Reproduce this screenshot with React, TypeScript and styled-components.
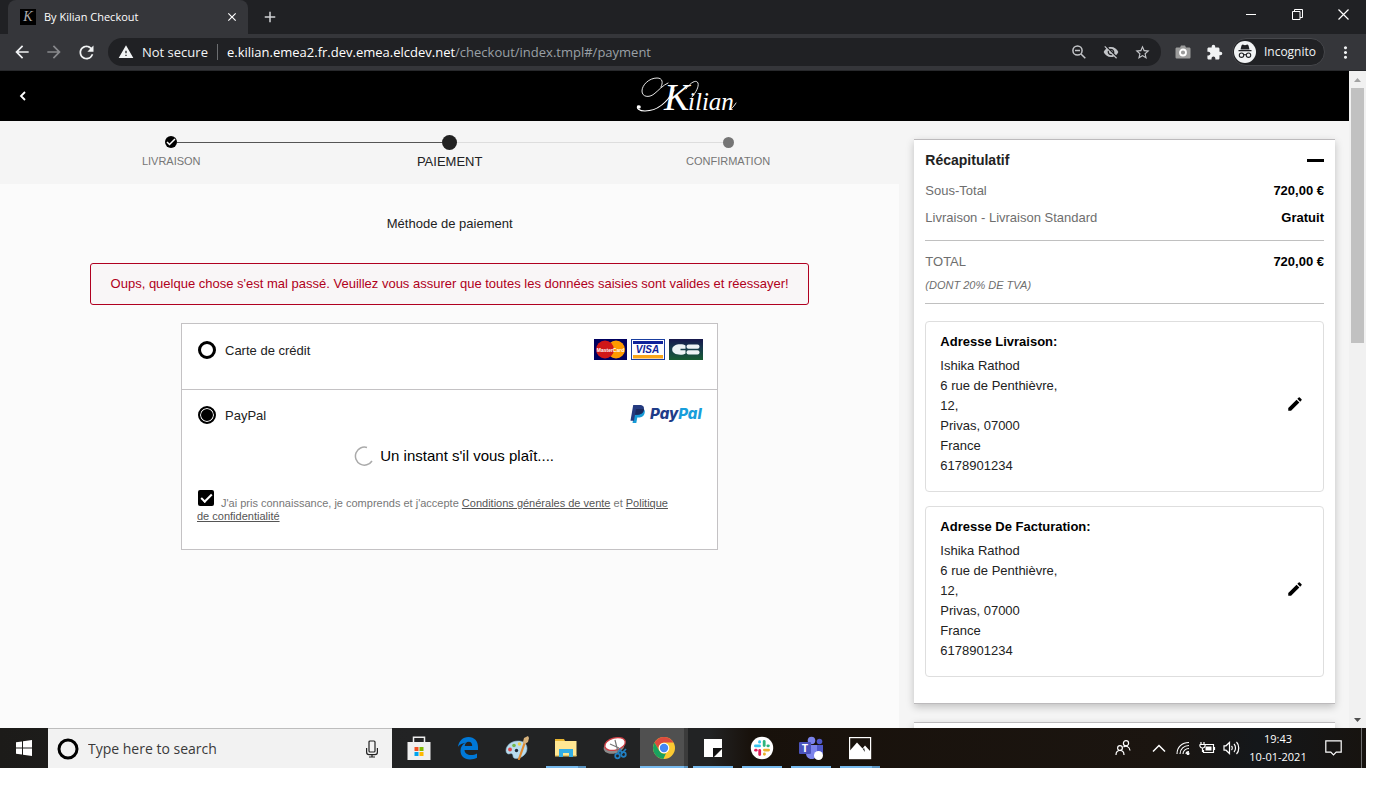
import React from "react";
import styled, { createGlobalStyle } from "styled-components";
import {
  MdAdd,
  MdArrowBack,
  MdArrowForward,
  MdClose,
  MdEdit,
  MdExtension,
  MdMoreVert,
  MdRefresh,
  MdStarBorder,
  MdVisibilityOff,
  MdWarning,
} from "react-icons/md";

const pageFont = `"Liberation Sans", Arial, sans-serif`;
const systemFont = `"Open Sans", "Noto Sans", sans-serif`;

const GlobalStyle = createGlobalStyle`
  *, *::before, *::after { box-sizing: border-box; }
  body { margin: 0; background: #fff; font-family: ${pageFont}; }
  button { border: 0; padding: 0; background: none; color: inherit; font: inherit; }
  h1, h2, h3, p, dl, dd, dt, ol, address { margin: 0; padding: 0; font: inherit; }
  svg { display: block; }
`;

const Screen = styled.div`
  display: flex;
  flex-direction: column;
  height: calc(100vh - 40px);
  margin-right: 18px;
`;

/* Browser window */

const TabStrip = styled.div`
  display: flex;
  height: 34px;
  padding-left: 8px;
  background: #202124;
  color: #e8eaed;
  font: 12px/16px ${systemFont};
`;

const Tab = styled.div`
  display: flex;
  align-items: center;
  gap: 8px;
  width: 240px;
  padding: 0 9px 0 12px;
  border-radius: 8px 8px 0 0;
  background: #35363a;
`;

const Favicon = styled.span`
  width: 16px;
  height: 16px;
  background: #000;
  color: #aaa;
  font: italic 14px/16px "Liberation Serif", serif;
  text-align: center;
`;

const TabTitle = styled.span`
  flex: 1;
  font-size: 11px;
  color: #fff;
`;

const NewTab = styled.button`
  display: grid;
  place-items: center;
  width: 44px;
  color: #d0d2d5;
`;

const WindowControls = styled.div`
  display: flex;
  height: 28px;
  margin-left: auto;
`;

const WindowButton = styled.button`
  display: grid;
  place-items: center;
  width: 46px;
`;

const Toolbar = styled.div`
  display: flex;
  align-items: center;
  height: 37px;
  padding: 0 5px 0 6px;
  border-bottom: 1px solid #28292c;
  background: #35363a;
  color: #f1f3f4;
  font: 13px/18px ${systemFont};
`;

const ToolButton = styled.button<{ $dim?: boolean }>`
  display: grid;
  place-items: center;
  width: 32px;
  height: 28px;
  color: ${(p) => (p.$dim ? "#88898c" : "#f1f3f4")};
`;

const Omnibox = styled.div`
  display: flex;
  flex: 1;
  align-items: center;
  height: 28px;
  margin: 0 6px;
  padding: 0 2px 0 10px;
  border-radius: 14px;
  background: #202124;
`;

const SecurityChip = styled.button`
  display: flex;
  align-items: center;
  gap: 8px;
  padding-right: 9px;
  margin-right: 9px;
  border-right: 1px solid #6b6d70;
  line-height: 16px;
`;

const Url = styled.span`
  flex: 1;
  color: #9aa0a6;
`;

const UrlHost = styled.span`
  color: #fff;
`;

const OmniIcon = styled(ToolButton)`
  color: #c3c5c8;
`;

const IncognitoChip = styled.button`
  display: flex;
  align-items: center;
  gap: 8px;
  height: 28px;
  margin: 0 4px 0 1px;
  padding: 0 8px 0 1px;
  border: 1px solid #46474b;
  border-radius: 14px;
  background: #202124;
  font-size: 12px;
`;

/* Page viewport */

const Viewport = styled.div`
  display: flex;
  flex: 1;
  min-height: 0;
`;

const Page = styled.div`
  flex: 1;
  overflow: hidden;
  background: #f5f5f5;
`;

const SiteHeader = styled.header`
  display: grid;
  grid-template-columns: 1fr auto 1fr;
  align-items: center;
  height: 50px;
  padding: 0 14px;
  background: #000;
  color: #fff;
`;

const BackButton = styled.button`
  display: grid;
  place-items: center;
  width: 18px;
  height: 24px;
`;

const Columns = styled.div`
  display: grid;
  grid-template-columns: 2fr 1fr;
`;

const Main = styled.main`
  min-height: 100vh;
  background: #fbfbfb;
`;

const Stepper = styled.ol`
  display: grid;
  grid-template-columns: repeat(3, 1fr);
  height: 63px;
  padding: 13px 32px 0;
  background: #f5f5f5;
  list-style: none;
`;

const Step = styled.li<{ $current?: boolean }>`
  display: flex;
  flex-direction: column;
  gap: 4px;
  color: ${(p) => (p.$current ? "#222" : "#767676")};
  font-size: ${(p) => (p.$current ? "13px" : "11px")};
  line-height: ${(p) => (p.$current ? "16px" : "14px")};
  text-align: center;
`;

const StepTrack = styled.span`
  display: flex;
  align-items: center;
  height: 16px;
`;

const StepLine = styled.span<{ $color: string }>`
  flex: 1;
  height: 1px;
  background: ${(p) => p.$color};
`;

const StepDot = styled.span<{ $size: number; $color: string }>`
  display: grid;
  place-items: center;
  width: ${(p) => p.$size}px;
  height: ${(p) => p.$size}px;
  border-radius: 50%;
  background: ${(p) => p.$color};
`;

const SectionTitle = styled.h1`
  padding-top: 32px;
  color: #222;
  font-size: 13px;
  line-height: 16px;
  text-align: center;
`;

const ErrorBox = styled.p`
  margin: 31px 90px 0;
  padding: 12px 8px;
  border: 1px solid #b00020;
  border-radius: 3px;
  background: #f9f6f7;
  color: #b00020;
  font-size: 13px;
  line-height: 16px;
  text-align: center;
`;

const PaymentPanel = styled.form`
  margin: 18px 181px 0;
  border: 1px solid #c4c2c4;
  background: #fff;
`;

const PaymentOption = styled.section`
  min-height: 65px;
  padding: 15px 14px 26px 15px;

  & + & {
    padding-top: 14px;
    border-top: 1px solid #c4c2c4;
  }
`;

const OptionHeader = styled.div`
  display: flex;
  align-items: center;
  justify-content: space-between;
  height: 22px;
`;

const OptionLabel = styled.label`
  display: flex;
  align-items: center;
  gap: 9px;
  color: #222;
  font-size: 13px;
`;

const Radio = styled.input`
  appearance: none;
  width: 18px;
  height: 18px;
  margin: 0 0 0 1px;
  border: 3px solid #000;
  border-radius: 50%;
  background: #fff;

  &:checked {
    border-width: 2px;
    background: #000;
    box-shadow: inset 0 0 0 1px #fff;
  }
`;

const LogoRow = styled.span`
  display: flex;
  align-self: flex-start;
  gap: 4px;
`;

const Waiting = styled.p`
  display: flex;
  align-items: center;
  justify-content: center;
  gap: 6px;
  margin-top: 20px;
  padding-left: 8px;
  color: #000;
  font-size: 15px;
  line-height: 20px;
`;

const Terms = styled.p`
  margin-top: 24px;
  padding-right: 24px;
  color: #777;
  font-size: 11px;
  line-height: 13px;
`;

const TermsCheck = styled.input`
  appearance: none;
  display: inline-block;
  width: 16px;
  height: 16px;
  margin: 0 7px 1px 1px;
  border-radius: 2px;
  background: #000;
  vertical-align: baseline;

  &:checked::before {
    content: "";
    display: block;
    width: 11px;
    height: 6px;
    margin: 4px 0 0 3px;
    border: solid #fff;
    border-width: 0 0 2px 2px;
    transform: rotate(-45deg);
  }
`;

const TermsLink = styled.a`
  color: #555;
`;

/* Order summary */

const Aside = styled.aside`
  display: flex;
  flex-direction: column;
  gap: 18px;
  padding: 18px 14px 0 15px;
`;

const Card = styled.section`
  min-height: 60px;
  padding: 10px 11px 26px;
  border: solid #bcbabc;
  border-width: 1px 0;
  background: #fff;
  box-shadow: 0 3px 8px rgba(0, 0, 0, 0.22);
`;

const CardHeader = styled.div`
  display: flex;
  align-items: center;
  justify-content: space-between;
  height: 20px;
`;

const CardTitle = styled.h2`
  color: #222;
  font-size: 14px;
  font-weight: bold;
`;

const CollapseButton = styled.button`
  width: 17px;
  height: 3px;
  background: #000;
`;

const Totals = styled.dl`
  display: flex;
  flex-direction: column;
  gap: 7px;
  padding: 11px 0 12px;
  border-bottom: 1px solid #c0c0c0;
`;

const TotalRow = styled.div`
  display: flex;
  justify-content: space-between;
  color: #6e6e6e;
  font-size: 13px;
  line-height: 20px;
`;

const Amount = styled.dd`
  color: #000;
  font-weight: bold;
`;

const TaxNote = styled.div`
  color: #6e6e6e;
  font-size: 11px;
  font-style: italic;
  line-height: 12px;
`;

const AddressBox = styled.section`
  display: flex;
  align-items: center;
  justify-content: space-between;
  margin-top: 14px;
  padding: 10px 19px 15px 14px;
  border: 1px solid #dedede;
  border-radius: 4px;
  color: #222;
  font-size: 13px;
  line-height: 20px;

  ${Totals} + & {
    margin-top: 17px;
  }
`;

const AddressTitle = styled.h3`
  margin-bottom: 4px;
  color: #000;
  font-weight: bold;
`;

const Scrollbar = styled.div`
  display: flex;
  flex-direction: column;
  width: 17px;
  background: #f1f1f1;
`;

const ScrollArrow = styled.button`
  display: grid;
  place-items: center;
  height: 17px;
`;

const ScrollTrack = styled.div`
  flex: 1;
  padding: 0 2px;
`;

const ScrollThumb = styled.div`
  height: 41%;
  background: #c1c1c1;
`;

/* Taskbar */

const Taskbar = styled.footer`
  display: flex;
  height: 40px;
  background: linear-gradient(90deg, #1c1b19 0, #222324 30%, #222324 52%, #18110b 55%, #1b1510 85%, #14171a 92%, #17130f 100%);
  color: #fff;
  font: 12px/18px ${systemFont};
`;

const StartButton = styled.button`
  display: grid;
  place-items: center;
  width: 48px;
`;

const SearchBox = styled.label`
  display: flex;
  align-items: center;
  width: 344px;
  padding: 0 12px 0 8px;
  border-top: 1px solid #bdbdbd;
  background: #f2f2f2;
  color: #222;
`;

const SearchInput = styled.input`
  flex: 1;
  min-width: 0;
  margin-left: 8px;
  padding: 0;
  border: 0;
  outline: 0;
  background: none;
  font: 14px/20px ${systemFont};

  &::placeholder {
    color: #3a3a3a;
    opacity: 1;
  }
`;

const Apps = styled.nav`
  display: flex;
  gap: 1px;
  margin-left: 3px;
`;

const AppButton = styled.button<{ $open?: boolean; $active?: boolean; $stacked?: boolean }>`
  display: flex;
  flex-direction: column;
  align-items: center;
  justify-content: space-between;
  width: 48px;
  padding-top: 8px;
  background: ${(p) => (p.$active ? "linear-gradient(90deg, #505050 44px, #3b3b3b 44px)" : "none")};

  &::after {
    content: "";
    width: ${(p) => (p.$active ? 48 : 40)}px;
    height: 2px;
    background: ${(p) =>
      !p.$open
        ? "none"
        : p.$active
          ? "linear-gradient(90deg, #76b9ed 44px, #5a93c0 44px)"
          : p.$stacked
            ? "linear-gradient(90deg, #76b9ed 32px, #5a93c0 32px)"
            : "#76b9ed"};
  }
`;

const Tray = styled.div`
  display: flex;
  align-items: center;
  margin-left: auto;
`;

const TrayButton = styled.button`
  display: grid;
  place-items: center;
  width: 24px;
  height: 40px;
`;

const PeopleButton = styled(TrayButton)`
  margin-right: 12px;
`;

const Clock = styled.button`
  width: 66px;
  padding-left: 4px;
  font-size: 11px;
  text-align: center;
`;

const NotificationButton = styled(TrayButton)`
  width: 48px;
  margin-right: 4px;
`;

const ShowDesktop = styled.button`
  width: 5px;
  height: 40px;
  border-left: 1px solid #6d6d6d;
`;

/* Drawings */

const KilianLogo = () => (
  <svg width="126" height="42" viewBox="-22 0 126 42" role="img" aria-label="Kilian">
    <g fill="none" stroke="#fff" strokeLinecap="round">
      <path strokeWidth=".9" d="M27 12C29 8 29 3 23 3C15 3 8 10 8 16C8 22 15 23 20 19C24 16 29 10 34 8" />
      <path strokeWidth="1.200" d="M40 15C34 26 24 36 11 36C5 36 2 33 4 31" />
      <path strokeWidth=".9" d="M52 14C56 8 62 4 64 8C65 12 62 17 58 22" />
      <path strokeWidth=".9" d="M96 34C98 34 100 31 102 28" />
    </g>
    <circle cx="5" cy="32" r="1.800" fill="#fff" />
    <text y="35" fill="#fff" fontFamily="Liberation Serif, serif" fontStyle="italic">
      <tspan x="30" fontSize="38">
        K
      </tspan>
      <tspan x="54" fontSize="25">
        ilian
      </tspan>
    </text>
  </svg>
);

const MasterCardLogo = () => (
  <svg width="33" height="21" viewBox="0 0 33 21" role="img" aria-label="MasterCard">
    <rect width="33" height="21" fill="#00005f" />
    <circle cx="22" cy="10.500" r="9" fill="#ff9a00" />
    <circle cx="11" cy="10.500" r="9" fill="#d01818" />
    <text x="16.500" y="12.500" textAnchor="middle" fill="#fff" fontFamily="Liberation Sans" fontWeight="bold" fontSize="5">
      MasterCard
    </text>
  </svg>
);

const VisaLogo = () => (
  <svg width="34" height="21" viewBox="0 0 34 21" role="img" aria-label="Visa">
    <rect x=".5" y=".5" width="33" height="20" fill="#fff" stroke="#1a3ea0" />
    <rect x="2" y="2" width="30" height="3" fill="#10239a" />
    <rect x="2" y="16" width="30" height="3.500" fill="#f9a61a" />
    <text x="16.500" y="14" textAnchor="middle" fill="#10239a" fontFamily="Liberation Sans" fontWeight="bold" fontStyle="italic" fontSize="10">
      VISA
    </text>
  </svg>
);

const CbLogo = () => (
  <svg width="34" height="21" viewBox="0 0 34 21" role="img" aria-label="CB">
    <defs>
      <linearGradient id="cb" x1="0" y1="0" x2="0" y2="1">
        <stop offset="0" stopColor="#17174c" />
        <stop offset=".45" stopColor="#173a4c" />
        <stop offset="1" stopColor="#175c31" />
      </linearGradient>
    </defs>
    <rect width="34" height="21" fill="url(#cb)" />
    <path fill="#edf3f5" d="M16.500 9.800V6.500c-1-.9-3-1.200-5-1.200-5 0-8.300 2-8.300 5.200s3.300 5.200 8.300 5.200c2 0 4-.3 5-1.200v-3.300h-5V9.800z" />
    <rect x="17.500" y="5.500" width="13" height="4.300" rx="2" fill="#edf3f5" />
    <rect x="17.500" y="11.200" width="13" height="4.300" rx="2" fill="#edf3f5" />
  </svg>
);

const PayPalLogo = () => (
  <svg width="74" height="22" viewBox="0 0 74 22" role="img" aria-label="PayPal">
    <path fill="#179bd7" d="M6.500 5h8.200c1.300 1.100 1.300 2.700.9 4.200-.8 3.200-3.200 4.200-6 4.200H8.300l-1 5.600H3.500z" />
    <path fill="#253b80" d="M4.200 1h6.300c3.500 0 5 1.600 4.400 4.700-.7 3.500-3.200 5-6.600 5H6l-1 6.100H1.500z" />
    <path fill="#1b2a5f" d="M7 5h7.900c.2 3.500-2.700 5.700-6.600 5.700H6z" />
    <text x="21" y="15" fontFamily="Inter" fontWeight="800" fontStyle="italic" fontSize="15">
      <tspan fill="#1f3c88">Pay</tspan>
      <tspan fill="#189edb">Pal</tspan>
    </text>
  </svg>
);

const Spinner = () => (
  <svg width="20" height="20" viewBox="0 0 20 20" fill="none" stroke="#aaa" strokeWidth="1.500">
    <path d="M13 1.500A9 9 0 1 0 18 15" />
  </svg>
);

const CheckMark = () => (
  <svg width="10" height="8" viewBox="0 0 10 8" fill="none" stroke="#fff" strokeWidth="1.500">
    <path d="M1 4l2.500 2.500L9 1" />
  </svg>
);

const ZoomOutIcon = () => (
  <svg width="14" height="14" viewBox="0 0 14 14" fill="none" stroke="currentColor" strokeWidth="1.500">
    <circle cx="5.500" cy="5.500" r="4.600" />
    <path d="M3 5.500h5M9 9l4.300 4.300" />
  </svg>
);

const CameraIcon = () => (
  <svg width="16" height="14" viewBox="0 0 16 14">
    <path fill="#9c9c9c" d="M2 2.500h3L6 .5h4l1 2h3c1 0 1.500.5 1.500 1.500v8c0 1-.5 1.500-1.500 1.500H2C1 13.500.5 13 .5 12V4c0-1 .5-1.500 1.500-1.500z" />
    <circle cx="8" cy="7.500" r="3" fill="#9c9c9c" stroke="#fff" strokeWidth="1.800" />
  </svg>
);

const IncognitoIcon = () => (
  <svg width="22" height="22" viewBox="0 0 22 22">
    <circle cx="11" cy="11" r="11" fill="#f1f3f4" />
    <path fill="#202124" d="M7.500 4.500l1-1 2.500.8 2.500-.8 1 1 1 4h-9zM4.500 9h13v1.200h-13z" />
    <g fill="none" stroke="#202124" strokeWidth="1.100">
      <circle cx="7.500" cy="14.200" r="2.200" />
      <circle cx="14.500" cy="14.200" r="2.200" />
      <path d="M9.700 14c.8-.6 1.800-.6 2.600 0" />
    </g>
  </svg>
);

const StoreIcon = () => (
  <svg width="24" height="24" viewBox="0 0 24 24">
    <path d="M6.500 6V1.200h11V6" fill="none" stroke="#eee" strokeWidth="1.500" />
    <path d="M.5 6h23v18H.5z" fill="#f0f0f0" />
    <path d="M7.500 11H11.500V15H7.500z" fill="#f25022" />
    <path d="M12.500 11H16.500V15H12.500z" fill="#7fba00" />
    <path d="M7.500 16H11.500V20H7.500z" fill="#00a4ef" />
    <path d="M12.500 16H16.500V20H12.500z" fill="#ffb900" />
  </svg>
);

const EdgeIcon = () => (
  <svg width="24" height="24" viewBox="0 0 24 24">
    <path
      fill="#0078d7"
      d="M2 10.700C2.800 5 6.800 1 12.400 1 18.500 1 22 5.300 22 11v3H8.500c.2 3.400 3 5 6.500 5 2.200 0 4.200-.6 6-1.600v4.400c-2 1.100-4.500 1.700-7 1.700-6 0-9.500-3.600-9.500-8.700 0-4 2.200-6.800 5.500-8.200C6.500 7.300 3.500 8.700 2 10.700zm6.700-.7h7.500c0-2.600-1-4.200-3.500-4.200-2.300 0-3.600 1.800-4 4.200z"
    />
  </svg>
);

const PaintIcon = () => (
  <svg width="24" height="24" viewBox="0 0 24 24">
    <path fill="#b9dcee" stroke="#8fb9d0" strokeWidth=".6" d="M13 5C6 5 1 9.500 1 14.500c0 3 2 4 4 3.200 2-.7 3 .6 3 2.300 0 2 1.600 2.800 4 2.400 6-1 10-5 10-10S18 5 13 5z" />
    <circle cx="5" cy="13.500" r="1.900" fill="#e04848" />
    <circle cx="9" cy="9.500" r="1.800" fill="#72b84c" />
    <circle cx="14.500" cy="8" r="1.800" fill="#f0d04a" />
    <circle cx="11.500" cy="14.500" r="1.700" fill="#1f2c38" />
    <path stroke="#e08a30" strokeWidth="2.200" strokeLinecap="round" d="M20 6l-6 17" />
    <path fill="#d7b27c" d="M18 6l1-4 4-2 1 2-1 4-3 2z" />
  </svg>
);

const FolderIcon = () => (
  <svg width="24" height="24" viewBox="0 0 24 24">
    <path fill="#e8b530" d="M1 3h9l1 2v4H1z" />
    <path fill="#ffe793" d="M1 5h21.500v15H1z" />
    <path fill="#e8c766" d="M1 19h21.500v1.500H1z" />
    <path fill="#34aee4" d="M5 13h14v8h-4v-4H9v4H5z" />
  </svg>
);

const SnipIcon = () => (
  <svg width="24" height="24" viewBox="0 0 24 24">
    <ellipse cx="11" cy="11" rx="10.500" ry="6.500" transform="rotate(-15 11 11)" fill="#8b8b8b" />
    <ellipse cx="12" cy="8" rx="10.500" ry="6" transform="rotate(-15 12 8)" fill="#fff" stroke="#cf3f45" strokeWidth="1.300" />
    <path stroke="#777" strokeWidth="1.200" d="M7 8l9 4M12 4l3 12" />
    <g fill="none" stroke="#2280c4" strokeWidth="1.700">
      <circle cx="14.500" cy="20" r="2.300" />
      <circle cx="20.500" cy="18.500" r="2.300" />
      <path d="M15 17.500l2-4 2 3.500 4-4" />
    </g>
  </svg>
);

const ChromeIcon = () => (
  <svg width="24" height="24" viewBox="0 0 24 24">
    <circle cx="12" cy="12" r="11" fill="#fbc932" />
    <path fill="#dd4b3e" d="M2.500 6.500A11 11 0 0 1 21.500 6.500H12A5.500 5.500 0 0 0 7.200 14.800z" />
    <path fill="#1aa15f" d="M2.500 6.500L7.200 14.800A5.500 5.500 0 0 0 14 17.200L11.400 23A11 11 0 0 1 2.500 6.500z" />
    <circle cx="12" cy="12" r="5.300" fill="#fff" />
    <circle cx="12" cy="12" r="4.200" fill="#4587f3" />
  </svg>
);

const NotesIcon = () => (
  <svg width="24" height="24" viewBox="0 0 24 24">
    <path fill="#fff" d="M3 3h18v9h-9v9H3z" />
    <path fill="#111" d="M12 12h9l-9 9z" />
    <path fill="#fff" d="M21 13v8h-8z" />
  </svg>
);

const SlackIcon = () => (
  <svg width="24" height="24" viewBox="0 0 24 24">
    <circle cx="12" cy="12" r="11.200" fill="#fff" />
    <g fill="#36c5f0">
      <rect x="4" y="8.500" width="7" height="2.800" rx="1.400" />
      <rect x="8.200" y="4.300" width="2.800" height="3.300" rx="1.400" />
    </g>
    <g fill="#2eb67d">
      <rect x="12.800" y="4" width="2.800" height="7" rx="1.400" />
      <rect x="16.400" y="8.400" width="3.400" height="2.800" rx="1.400" />
    </g>
    <g fill="#ecb22e">
      <rect x="13" y="12.700" width="7" height="2.800" rx="1.400" />
      <rect x="13" y="16.400" width="2.800" height="3.300" rx="1.400" />
    </g>
    <g fill="#e01e5a">
      <rect x="8.300" y="13" width="2.800" height="7" rx="1.400" />
      <rect x="4.200" y="12.800" width="3.400" height="2.800" rx="1.400" />
    </g>
  </svg>
);

const TeamsIcon = () => (
  <svg width="26" height="24" viewBox="0 0 26 24">
    <circle cx="13.500" cy="4.500" r="3.800" fill="#7b83eb" />
    <circle cx="21.500" cy="5.500" r="2.800" fill="#5059c9" />
    <path fill="#5059c9" d="M17 9h8v8c0 2-2 4-4 4h-4z" />
    <path fill="#7b83eb" d="M8 9h11v8c0 4-2 6-5.500 6S8 20.500 8 17z" />
    <rect x="1" y="6" width="12" height="12" rx="1" fill="#4b53bc" />
    <text x="7" y="16" textAnchor="middle" fill="#fff" fontFamily="Open Sans" fontWeight="bold" fontSize="11">
      T
    </text>
    <circle cx="20.500" cy="19.500" r="4.500" fill="#fff" />
  </svg>
);

const PhotosIcon = () => (
  <svg width="24" height="24" viewBox="0 0 24 24">
    <rect x="1.600" y="1.600" width="21" height="21" fill="none" stroke="#fff" strokeWidth="1.200" />
    <path fill="#fff" d="M1.500 15L9 6.500l5.500 6L17 9.500l5.500 6V23h-21z" />
    <path fill="#222" d="M14.800 13l2.200 3-.8-4z" />
  </svg>
);

const lineIcon = { fill: "none", stroke: "#fff", strokeWidth: 1.2 } as const;

/* Data */

const addressLines = ["Ishika Rathod", "6 rue de Penthièvre,", "12,", "Privas, 07000", "France", "6178901234"];

const apps = [
  { name: "Microsoft Store", icon: <StoreIcon /> },
  { name: "Edge", icon: <EdgeIcon /> },
  { name: "Paint", icon: <PaintIcon /> },
  { name: "File Explorer", icon: <FolderIcon />, open: true, stacked: true },
  { name: "Snipping Tool", icon: <SnipIcon /> },
  { name: "Chrome", icon: <ChromeIcon />, open: true, active: true },
  { name: "Sticky Notes", icon: <NotesIcon />, open: true },
  { name: "Slack", icon: <SlackIcon />, open: true },
  { name: "Teams", icon: <TeamsIcon />, open: true },
  { name: "Photos", icon: <PhotosIcon />, open: true, stacked: true },
];

const DONE = "#555";
const TODO = "#ddd";
const NONE = "transparent";

const Address = ({ title }: { title: string }) => (
  <AddressBox>
    <div>
      <AddressTitle>{title}</AddressTitle>
      <address>
        {addressLines.map((line) => (
          <div key={line}>{line}</div>
        ))}
      </address>
    </div>
    <button type="button" aria-label={`Modifier ${title}`}>
      <MdEdit size={18} color="#000" />
    </button>
  </AddressBox>
);

const BrowserChrome = () => (
  <>
    <TabStrip>
      <Tab>
        <Favicon>K</Favicon>
        <TabTitle>By Kilian Checkout</TabTitle>
        <button type="button" aria-label="Close tab">
          <MdClose size={14} color="#fff" />
        </button>
      </Tab>
      <NewTab type="button" aria-label="New tab">
        <MdAdd size={18} />
      </NewTab>
      <WindowControls>
        <WindowButton type="button" aria-label="Minimize">
          <svg width="11" height="11">
            <path d="M0 5.500h10" stroke="#fff" />
          </svg>
        </WindowButton>
        <WindowButton type="button" aria-label="Restore">
          <svg width="11" height="11" fill="none" stroke="#fff">
            <path d="M.5 2.500h7.500v8H.5zM2.500 2.500V.5h8v8H8" />
          </svg>
        </WindowButton>
        <WindowButton type="button" aria-label="Close">
          <svg width="11" height="11" stroke="#fff" strokeWidth="1.200">
            <path d="M.5.5l10 10M10.500.5l-10 10" />
          </svg>
        </WindowButton>
      </WindowControls>
    </TabStrip>
    <Toolbar>
      <ToolButton type="button" aria-label="Back">
        <MdArrowBack size={20} />
      </ToolButton>
      <ToolButton type="button" aria-label="Forward" $dim>
        <MdArrowForward size={20} />
      </ToolButton>
      <ToolButton type="button" aria-label="Reload">
        <MdRefresh size={21} />
      </ToolButton>
      <Omnibox>
        <SecurityChip type="button">
          <MdWarning size={16} />
          Not secure
        </SecurityChip>
        <Url>
          <UrlHost>e.kilian.emea2.fr.dev.emea.elcdev.net</UrlHost>
          /checkout/index.tmpl#/payment
        </Url>
        <OmniIcon type="button" aria-label="Zoom">
          <ZoomOutIcon />
        </OmniIcon>
        <OmniIcon type="button" aria-label="Cookies blocked">
          <MdVisibilityOff size={16} />
        </OmniIcon>
        <OmniIcon type="button" aria-label="Bookmark">
          <MdStarBorder size={17} />
        </OmniIcon>
      </Omnibox>
      <ToolButton type="button" aria-label="Screenshot extension" $dim>
        <CameraIcon />
      </ToolButton>
      <ToolButton type="button" aria-label="Extensions">
        <MdExtension size={17} />
      </ToolButton>
      <IncognitoChip type="button">
        <IncognitoIcon />
        Incognito
      </IncognitoChip>
      <ToolButton type="button" aria-label="Menu">
        <MdMoreVert size={19} />
      </ToolButton>
    </Toolbar>
  </>
);

const CheckoutPage = () => (
  <Page>
    <SiteHeader>
      <BackButton type="button" aria-label="Retour">
        <svg width="8" height="12" fill="none" stroke="#fff" strokeWidth="1.800">
          <path d="M6 2L2 6l4 4" />
        </svg>
      </BackButton>
      <KilianLogo />
    </SiteHeader>
    <Columns>
      <Main>
        <Stepper>
          <Step>
            <StepTrack>
              <StepLine $color={NONE} />
              <StepDot $size={12} $color="#000">
                <CheckMark />
              </StepDot>
              <StepLine $color={DONE} />
            </StepTrack>
            LIVRAISON
          </Step>
          <Step $current aria-current="step">
            <StepTrack>
              <StepLine $color={DONE} />
              <StepDot $size={15} $color="#222" />
              <StepLine $color={TODO} />
            </StepTrack>
            PAIEMENT
          </Step>
          <Step>
            <StepTrack>
              <StepLine $color={TODO} />
              <StepDot $size={11} $color="#757575" />
              <StepLine $color={NONE} />
            </StepTrack>
            CONFIRMATION
          </Step>
        </Stepper>
        <SectionTitle>Méthode de paiement</SectionTitle>
        <ErrorBox role="alert">
          Oups, quelque chose s'est mal passé. Veuillez vous assurer que toutes les données saisies sont valides et
          réessayer!
        </ErrorBox>
        <PaymentPanel>
          <PaymentOption>
            <OptionHeader>
              <OptionLabel>
                <Radio type="radio" name="method" value="card" />
                Carte de crédit
              </OptionLabel>
              <LogoRow>
                <MasterCardLogo />
                <VisaLogo />
                <CbLogo />
              </LogoRow>
            </OptionHeader>
          </PaymentOption>
          <PaymentOption>
            <OptionHeader>
              <OptionLabel>
                <Radio type="radio" name="method" value="paypal" defaultChecked />
                PayPal
              </OptionLabel>
              <PayPalLogo />
            </OptionHeader>
            <Waiting role="status">
              <Spinner />
              Un instant s'il vous plaît....
            </Waiting>
            <Terms>
              <TermsCheck type="checkbox" id="terms" defaultChecked />
              <label htmlFor="terms">J'ai pris connaissance, je comprends et j'accepte</label>{" "}
              <TermsLink href="#conditions">Conditions générales de vente</TermsLink> et{" "}
              <TermsLink href="#confidentialite">Politique de confidentialité</TermsLink>
            </Terms>
          </PaymentOption>
        </PaymentPanel>
      </Main>
      <Aside>
        <Card>
          <CardHeader>
            <CardTitle>Récapitulatif</CardTitle>
            <CollapseButton type="button" aria-label="Réduire" />
          </CardHeader>
          <Totals>
            <TotalRow>
              <dt>Sous-Total</dt>
              <Amount>720,00 €</Amount>
            </TotalRow>
            <TotalRow>
              <dt>Livraison - Livraison Standard</dt>
              <Amount>Gratuit</Amount>
            </TotalRow>
          </Totals>
          <Totals>
            <TotalRow>
              <dt>TOTAL</dt>
              <Amount>720,00 €</Amount>
            </TotalRow>
            <TaxNote>
              <dd>(DONT 20% DE TVA)</dd>
            </TaxNote>
          </Totals>
          <Address title="Adresse Livraison:" />
          <Address title="Adresse De Facturation:" />
        </Card>
        <Card />
      </Aside>
    </Columns>
  </Page>
);

const DesktopTaskbar = () => (
  <Taskbar>
    <StartButton type="button" aria-label="Start">
      <svg width="16" height="16" viewBox="0 0 16 16" fill="#fff">
        <path d="M0 2.200L6 1.400V7.400H0zM7 1.200L16 0V7.400H7zM0 8.400H6V14.500L0 13.700zM7 8.400H16V16L7 14.700z" />
      </svg>
    </StartButton>
    <SearchBox>
      <svg width="24" height="24" viewBox="0 0 24 24" fill="none">
        <circle cx="12" cy="12" r="9" stroke="#000" strokeWidth="3" />
      </svg>
      <SearchInput type="search" placeholder="Type here to search" aria-label="Type here to search" />
      <svg width="16" height="18" viewBox="0 0 16 18" fill="none" stroke="#222" strokeWidth="1.200">
        <rect x="5" y="1" width="6" height="11" rx="1" />
        <path d="M2.600 8v4c0 2 1 2.600 2.400 2.600h6c1.400 0 2.400-.6 2.400-2.600V8M8 14.600V17M5 17h6" />
      </svg>
    </SearchBox>
    <Apps>
      {apps.map((app) => (
        <AppButton
          key={app.name}
          type="button"
          aria-label={app.name}
          $open={app.open}
          $active={app.active}
          $stacked={app.stacked}
        >
          {app.icon}
        </AppButton>
      ))}
    </Apps>
    <Tray>
      <PeopleButton type="button" aria-label="People">
        <svg width="16" height="16" viewBox="0 0 16 16" {...lineIcon}>
          <circle cx="5" cy="8" r="2.400" />
          <path d="M1 15c0-3 1.500-4.500 4-4.500S9 12 9 15" />
          <circle cx="11" cy="3.200" r="2.600" />
          <path d="M8.500 7c2-1.500 6-1 6.500 3.500" />
        </svg>
      </PeopleButton>
      <TrayButton type="button" aria-label="Hidden icons">
        <svg width="14" height="9" viewBox="0 0 14 9" {...lineIcon} strokeWidth={1.5}>
          <path d="M1 7.500l6-6 6 6" />
        </svg>
      </TrayButton>
      <TrayButton type="button" aria-label="Network">
        <svg width="14" height="14" viewBox="0 0 14 14" {...lineIcon} strokeWidth={1.1}>
          <path d="M1 13C1 6 6 1.500 13 1.500M4 13c0-5 4-8.500 9-8.500M7 13c0-3 2.500-5.500 6-5.500M10 13c0-1.500 1-2.500 3-2.500" />
          <circle cx="12" cy="12.500" r="1" fill="#fff" />
        </svg>
      </TrayButton>
      <TrayButton type="button" aria-label="Battery">
        <svg width="17" height="14" viewBox="0 0 17 14" {...lineIcon}>
          <path d="M6 3.500h8.500v8h-10V9M15.500 6v3M2 1v2M5 1v2M.8 3.500h5.400c0 2.500-1 3.500-2.700 3.500S.8 6 .8 3.500M3.500 7v4" />
          <rect x="6.500" y="5.500" width="6" height="4" fill="#fff" stroke="none" />
        </svg>
      </TrayButton>
      <TrayButton type="button" aria-label="Volume">
        <svg width="17" height="14" viewBox="0 0 17 14" {...lineIcon}>
          <path d="M1 4.800h2L6.500 1.500v11L3 9.200H1zM8.500 5c1 1 1 3 0 4M11 3c2 2 2 6 0 8M13.500 1c3 3 3 9 0 12" />
        </svg>
      </TrayButton>
      <Clock type="button">
        19:43
        <br />
        10-01-2021
      </Clock>
      <NotificationButton type="button" aria-label="Notifications">
        <svg width="17" height="16" viewBox="0 0 17 16" {...lineIcon}>
          <path d="M.8.800h15.400v11.400h-5L8.500 15l-2.700-2.800h-5z" />
        </svg>
      </NotificationButton>
      <ShowDesktop type="button" aria-label="Show desktop" />
    </Tray>
  </Taskbar>
);

export default function App() {
  return (
    <>
      <GlobalStyle />
      <Screen>
        <BrowserChrome />
        <Viewport>
          <CheckoutPage />
          <Scrollbar>
            <ScrollArrow type="button" aria-label="Scroll up">
              <svg width="7" height="4">
                <path d="M0 4l3.500-4L7 4z" fill="#a3a3a3" />
              </svg>
            </ScrollArrow>
            <ScrollTrack>
              <ScrollThumb />
            </ScrollTrack>
            <ScrollArrow type="button" aria-label="Scroll down">
              <svg width="7" height="4">
                <path d="M0 0h7L3.500 4z" fill="#505050" />
              </svg>
            </ScrollArrow>
          </Scrollbar>
        </Viewport>
        <DesktopTaskbar />
      </Screen>
    </>
  );
}
